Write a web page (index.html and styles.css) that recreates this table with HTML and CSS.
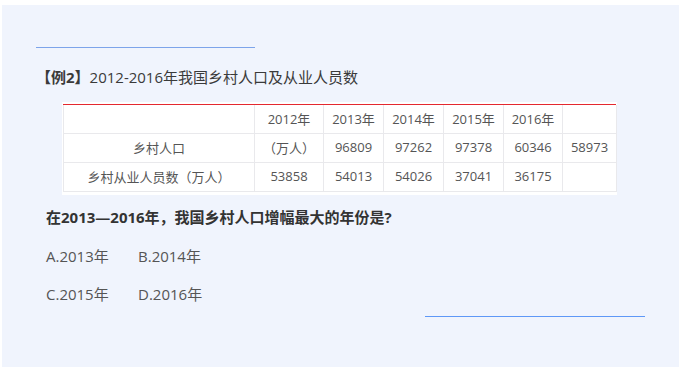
FILE: index.html
```html
<!DOCTYPE html>
<html lang="zh-CN">
<head>
<meta charset="utf-8">
<link rel="stylesheet" href="styles.css">
</head>
<body>
<div class="panel">
  <div class="rule rule-top"></div>
  <p class="title"><b>【例2】</b>2012-2016年我国乡村人口及从业人员数</p>
  <div class="table-wrap">
    <div class="table-top"></div>
    <table class="data">
      <colgroup>
        <col class="c0"><col class="c1"><col class="c2"><col class="c3"><col class="c4"><col class="c5"><col class="c6">
      </colgroup>
      <tr><td></td><td>2012年</td><td>2013年</td><td>2014年</td><td>2015年</td><td>2016年</td><td></td></tr>
      <tr><td>乡村人口</td><td>（万人）</td><td>96809</td><td>97262</td><td>97378</td><td>60346</td><td>58973</td></tr>
      <tr><td>乡村从业人员数（万人）</td><td>53858</td><td>54013</td><td>54026</td><td>37041</td><td>36175</td><td></td></tr>
    </table>
  </div>
  <p class="question">在2013—2016年，我国乡村人口增幅最大的年份是?</p>
  <div class="options">
    <span class="opt">A.2013年</span><span class="opt">B.2014年</span>
  </div>
  <div class="options options-second">
    <span class="opt">C.2015年</span><span class="opt">D.2016年</span>
  </div>
  <div class="rule rule-bottom"></div>
</div>
</body>
</html>
```

FILE: styles.css
```css
html, body {
  margin: 0;
  padding: 0;
  background: #ffffff;
}

body {
  font-family: "Open Sans", "Noto Sans CJK SC", sans-serif;
  color: #444;
  padding: 5px 7px 4px 2px;
}

.panel {
  background: #f0f4fd;
  height: 362px;
  box-sizing: border-box;
  padding-top: 42px;
}

.rule {
  height: 1px;
}

.rule-top {
  width: 219px;
  margin-left: 34px;
  background: #7da4ea;
}

.title {
  margin: 19px 0 0 34px;
  font-size: 15px;
  line-height: 20px;
  color: #3a3a3a;
  white-space: nowrap;
}

.title b {
  font-weight: 700;
}

.table-wrap {
  margin: 15px 0 0 60px;
  width: 555px;
  background: #fff;
  padding: 2px 1px 3px 1px;
  box-sizing: border-box;
}

.table-top {
  height: 1px;
  width: 553px;
  background: #e4282f;
}

.data {
  border-collapse: collapse;
  width: 553px;
  table-layout: fixed;
  font-size: 13px;
  color: #555;
}

.data td {
  border: 1px solid #e9e9ec;
  height: 26px;
  padding: 0 0 2px 0;
  text-align: center;
  white-space: nowrap;
}

.data tr:first-child td {
  border-top: 0;
}

.c0 { width: 191px; }
.c1 { width: 69px; }
.c2 { width: 60px; }
.c3 { width: 60px; }
.c4 { width: 60px; }
.c5 { width: 59px; }
.c6 { width: 54px; }

.question {
  margin: 12px 0 0 44px;
  font-size: 15px;
  line-height: 20px;
  font-weight: 700;
  color: #333;
  white-space: nowrap;
}

.options {
  margin: 19px 0 0 44px;
  display: flex;
  font-size: 15px;
  line-height: 20px;
  color: #555;
}

.options-second {
  margin-top: 18px;
}

.opt {
  width: 92px;
  white-space: nowrap;
}

.rule-bottom {
  width: 220px;
  margin: 12px 0 0 423px;
  background: #5f98f7;
}
```
